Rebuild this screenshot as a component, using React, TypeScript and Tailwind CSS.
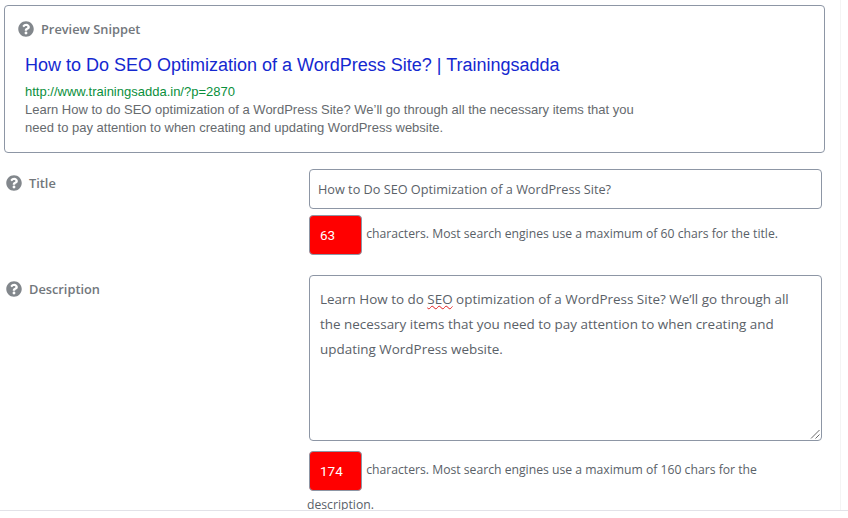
import { FaQuestionCircle } from "react-icons/fa";

const sans = "font-['Open_Sans',sans-serif]";

function FieldLabel({ text }: { text: string }) {
  return (
    <div className={`flex items-center gap-[7px] pl-1.5 text-[12.8px] font-semibold leading-4 text-[#72777c] ${sans}`}>
      <FaQuestionCircle className="h-4 w-4 text-[#82878c]" />
      <span>{text}</span>
    </div>
  );
}

function CounterNote({ value, note }: { value: number; note: string }) {
  return (
    <p className={`text-[12.2px] leading-[28px] text-[#5a6168] ${sans}`}>
      <span className="mr-px inline-block h-10 w-[53px] rounded-[4px] border border-[#8d96a5] bg-[#ff0000] pl-[10px] align-middle font-['Roboto',sans-serif] text-[13.5px] leading-[39px] text-white">
        {value}
      </span>{" "}
      {note}
    </p>
  );
}

export default function App() {
  return (
    <div className="flex h-[518px] w-[848px] flex-col overflow-hidden bg-white">
      <div className="h-[511px] shrink-0 overflow-hidden border-b border-[#e2e2e8]">
        <div className="h-full w-[841px] border-r border-[#f4f4f4] pl-1 pt-[5px]">
          {/* preview box */}
          <section className="h-[148px] w-[821px] rounded-[4px] border border-[#8d96a5] pl-[13px] pt-[15px]">
            <div className={`flex items-center gap-[7px] text-[12.8px] font-semibold leading-4 text-[#72777c] ${sans}`}>
              <FaQuestionCircle className="h-4 w-4 text-[#82878c]" />
              <span>Preview Snippet</span>
            </div>
            <div className="pl-[7px] pt-[17px] font-['Liberation_Sans',Arial,sans-serif]">
              <div className="text-lg leading-[22px] text-[#1428d0]">
                How to Do SEO Optimization of a WordPress Site? | Trainingsadda
              </div>
              <div className="mt-[7px] text-[13px] leading-[18px] text-[#0a8f3c]">http://www.trainingsadda.in/?p=2870</div>
              <div className="w-[620px] text-[13px] leading-[18px] text-[#666a6e]">
                Learn How to do SEO optimization of a WordPress Site? We’ll go through all the necessary items that you
                need to pay attention to when creating and updating WordPress website.
              </div>
            </div>
          </section>

          <div className="-ml-1 mt-[16px] grid grid-cols-[303px_1fr]">
            <div className="pt-1.5">
              <FieldLabel text="Title" />
            </div>
            <div className="pl-[6px]">
              <div
                className={`flex h-10 w-[513px] items-center rounded-[4px] border border-[#8d96a5] pl-2 pt-0.5 text-[12.7px] text-[#5a6168] ${sans}`}
              >
                How to Do SEO Optimization of a WordPress Site?
              </div>
              <div className="mt-1.5 h-[40px]">
                <CounterNote value={63} note="characters. Most search engines use a maximum of 60 chars for the title." />
              </div>
            </div>
          </div>

          <div className="-ml-1 mt-5 grid grid-cols-[303px_1fr]">
            <div className="pt-1.5">
              <FieldLabel text="Description" />
            </div>
            <div className="pl-[4px]">
              <div
                className={`relative ml-[2px] h-[166px] w-[513px] rounded-[4px] border border-[#8d96a5] pl-2.5 pr-6 pt-[11px] text-[13.45px] leading-[25px] text-[#5a6168] ${sans}`}
              >
                Learn How to do <span className="underline decoration-[#e02020] decoration-wavy decoration-1">SEO</span>{" "}
                optimization of a WordPress Site? We’ll go through all the necessary items that you need to pay attention
                to when creating and updating WordPress website.
                <svg className="absolute bottom-px right-px h-2.5 w-2.5" viewBox="0 0 10 10" fill="none" stroke="#6b6b6b" strokeWidth="1">
                  <path d="M1 9.5 9.5 1M5.5 9.5 9.5 5.5" />
                </svg>
              </div>
              <div className="mt-2.5 w-[480px] [&_span]:ml-[2px]">
                <CounterNote value={174} note="characters. Most search engines use a maximum of 160 chars for the description." />
              </div>
            </div>
          </div>
        </div>
      </div>
    </div>
  );
}
